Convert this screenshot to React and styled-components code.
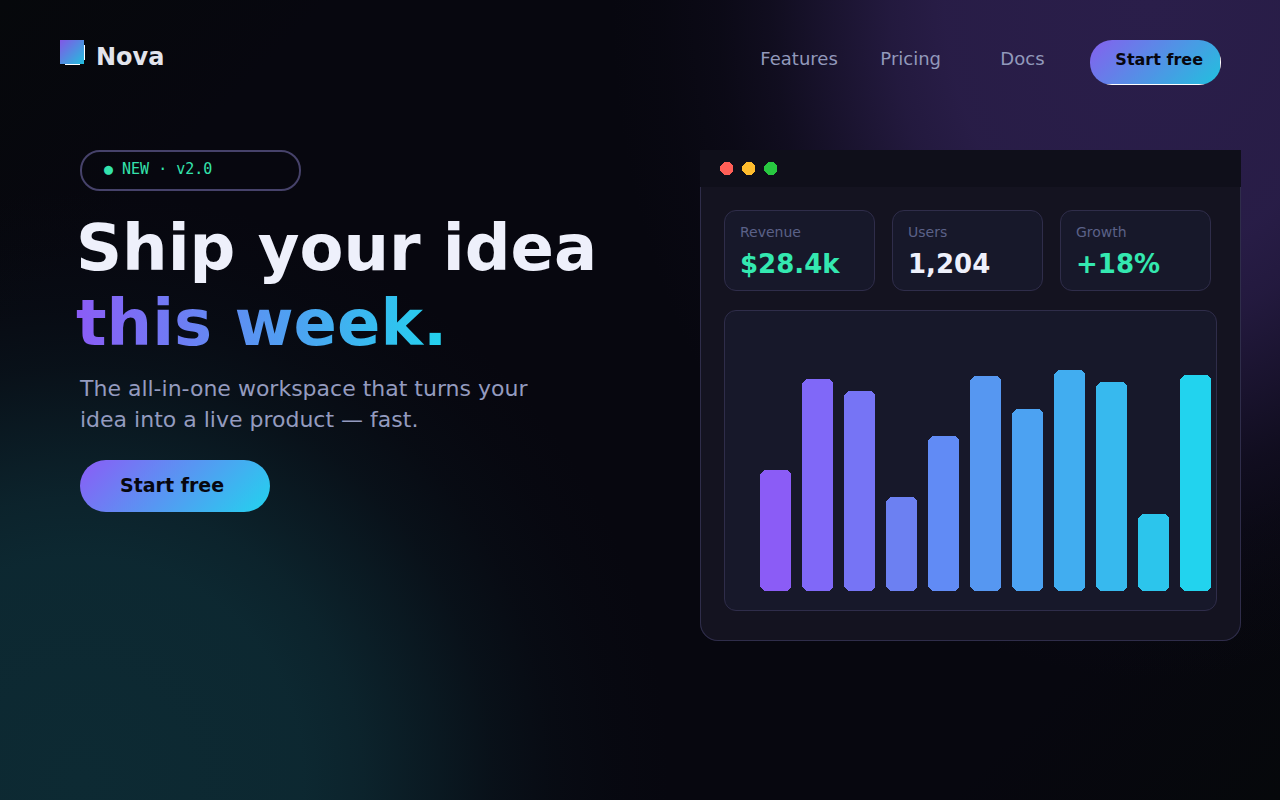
import styled, { createGlobalStyle } from 'styled-components'

const links = ['Features', 'Pricing', 'Docs']

const stats = [
  { label: 'Revenue', value: '$28.4k', up: true },
  { label: 'Users', value: '1,204', up: false },
  { label: 'Growth', value: '+18%', up: true },
]

const bars = [
  { height: 121, color: '#8b5cf6' },
  { height: 212, color: '#8068f8' },
  { height: 200, color: '#7674f5' },
  { height: 94, color: '#6c80f2' },
  { height: 155, color: '#618bf5' },
  { height: 215, color: '#5697f1' },
  { height: 182, color: '#4ca2f2' },
  { height: 221, color: '#41adf0' },
  { height: 209, color: '#37b9ee' },
  { height: 77, color: '#2cc5ec' },
  { height: 216, color: '#22d3ee' },
]

const dots = ['#ff5f57', '#febc2e', '#28c840']

const CHART_HEIGHT = 221
const BAR_WIDTH = 31
const BAR_STEP = 42

// box with its four corners cut off at 45 degrees
function cutBox(x, y, w, h, cut) {
  const side = w - cut * 2
  const rise = h - cut * 2
  return `M${x + cut} ${y}h${side}l${cut} ${cut}v${rise}l${-cut} ${cut}h${-side}l${-cut} ${-cut}v${-rise}z`
}

function Logo() {
  return (
    <svg width="25" height="25" viewBox="0 0 25 25" shapeRendering="crispEdges" aria-hidden="true">
      <defs>
        <linearGradient id="logo" x1="0" y1="0" x2="1" y2="1">
          <stop offset="0" stopColor="#8257e6" />
          <stop offset="1" stopColor="#22bfdd" />
        </linearGradient>
      </defs>
      <rect width="25" height="25" rx="8" fill="#fff" />
      <rect width="24" height="24" fill="url(#logo)" />
    </svg>
  )
}

function WindowDots() {
  return (
    <svg width="57" height="13" viewBox="0 0 57 13" shapeRendering="crispEdges" aria-hidden="true">
      {dots.map((color, idx) => (
        <path key={color} d={cutBox(idx * 22, 0, 13, 13, 4)} fill={color} />
      ))}
    </svg>
  )
}

function BarChart() {
  return (
    <svg viewBox="0 0 451 221" shapeRendering="crispEdges" role="img" aria-label="Growth chart">
      {bars.map((bar, idx) => (
        <path
          key={idx}
          d={cutBox(idx * BAR_STEP, CHART_HEIGHT - bar.height, BAR_WIDTH, bar.height, 4)}
          fill={bar.color}
        />
      ))}
    </svg>
  )
}

function App() {
  return (
    <>
      <GlobalStyle />
      <Page>
        <Header>
          <Brand href="#">
            <Logo />
            Nova
          </Brand>
          <Nav>
            {links.map((link) => (
              <NavLink key={link} href={`#${link.toLowerCase()}`}>{link}</NavLink>
            ))}
          </Nav>
          <NavButton type="button">Start free</NavButton>
        </Header>

        <Hero>
          <Copy>
            <Badge>● NEW · v2.0</Badge>
            <Title>
              Ship your idea
              <TitleAccent>this week.</TitleAccent>
            </Title>
            <Lead>The all-in-one workspace that turns your idea into a live product — fast.</Lead>
            <HeroButton type="button">Start free</HeroButton>
          </Copy>

          <Window>
            <TitleBar>
              <WindowDots />
            </TitleBar>
            <WindowBody>
              <Stats>
                {stats.map((stat) => (
                  <Stat key={stat.label}>
                    <StatLabel>{stat.label}</StatLabel>
                    <StatValue $up={stat.up}>{stat.value}</StatValue>
                  </Stat>
                ))}
              </Stats>
              <ChartPanel>
                <BarChart />
              </ChartPanel>
            </WindowBody>
          </Window>
        </Hero>
      </Page>
    </>
  )
}

const GlobalStyle = createGlobalStyle`
  * {
    box-sizing: border-box;
  }

  body {
    margin: 0;
    background: #07070f;
    color: #eef0fb;
    font-family: "DejaVu Sans", Verdana, sans-serif;
  }

  svg {
    display: block;
    flex: none;
  }
`

const glow = (rgb) => `
  rgba(${rgb}, 1) 0%,
  rgba(${rgb}, .94) 38%,
  rgba(${rgb}, .8) 48%,
  rgba(${rgb}, .52) 60%,
  rgba(${rgb}, .28) 70%,
  rgba(${rgb}, .12) 80%,
  rgba(${rgb}, .04) 90%,
  rgba(${rgb}, 0) 100%
`

const Page = styled.div`
  min-height: 100vh;
  background:
    radial-gradient(540px 680px at 1150px 0, ${glow('42, 30, 74')}),
    radial-gradient(590px 590px at 80px 780px, ${glow('13, 42, 51')}),
    linear-gradient(135deg, #06080b 0%, #07070f 16%, #07070f 84%, #06080b 100%);
`

const Header = styled.header`
  display: flex;
  align-items: flex-start;
  padding: 40px 59px 0 60px;
`

const Brand = styled.a`
  display: flex;
  gap: 11px;
  margin-right: auto;
  color: #e2e4ec;
  font-size: 24px;
  font-weight: bold;
  line-height: 34px;
  text-decoration: none;
`

const Nav = styled.nav`
  display: grid;
  grid-template-columns: 120px 120px 90px;
`

const NavLink = styled.a`
  color: #9299bb;
  font-size: 18px;
  line-height: 38px;
  text-decoration: none;
`

const Button = styled.button`
  border: 0;
  color: #07070f;
  font-family: inherit;
  font-weight: bold;
  text-align: left;
  white-space: nowrap;
  cursor: pointer;
`

const NavButton = styled(Button)`
  padding: 0 18px 6px 25px;
  border-radius: 22px;
  background:
    linear-gradient(135deg, #8560ee, #22c0de) 0 0 / calc(100% - 1px) calc(100% - 1px) no-repeat,
    #fff;
  font-size: 16px;
  line-height: 39px;
`

const HeroButton = styled(Button)`
  padding: 0 46px 2px 40px;
  border-radius: 26px;
  background: linear-gradient(135deg, #8b5cf6, #22d3ee);
  font-size: 19px;
  line-height: 50px;
`

const Hero = styled.main`
  display: grid;
  grid-template-columns: minmax(0, 1fr) minmax(0, 541px);
  gap: 40px;
  align-items: start;
  padding: 65px 39px 60px 80px;
`

const Copy = styled.div`
  display: flex;
  flex-direction: column;
  align-items: flex-start;
`

const Badge = styled.span`
  min-width: 221px;
  padding: 0 22px 2px;
  border: 2px solid #46426a;
  border-radius: 20px;
  color: #34e3ac;
  font-family: "DejaVu Sans Mono", monospace;
  font-size: 15px;
  line-height: 35px;
`

/* pulled left so the large glyphs line up optically with the text below */
const Title = styled.h1`
  margin: 20px 0 0 -4px;
  font-size: 64px;
  line-height: 75px;
`

const TitleAccent = styled.span`
  display: block;
  width: fit-content;
  background: linear-gradient(90deg, #8b5cf6, #22d3ee);
  background-clip: text;
  color: transparent;
`

const Lead = styled.p`
  max-width: 460px;
  margin: 12px 0 25px;
  color: #949bbf;
  font-size: 22px;
  line-height: 31px;
`

const Window = styled.section`
  border-radius: 0 0 18px 18px;
  background: #141320;
`

const TitleBar = styled.div`
  padding: 12px 20px;
  background: #0f0f1a;
`

const WindowBody = styled.div`
  padding: 23px 23px 29px;
  border: 1px solid #2f2d4a;
  border-top: 0;
  border-radius: 0 0 18px 18px;
`

const Stats = styled.dl`
  display: grid;
  grid-template-columns: repeat(3, 1fr);
  gap: 17px;
  margin: 0 0 19px;
  padding-right: 6px;
`

const Stat = styled.div`
  padding: 13px 15px 11px;
  border: 1px solid #2f2d4a;
  border-radius: 12px;
  background: #17182a;
`

const StatLabel = styled.dt`
  color: #5b6188;
  font-size: 14px;
  line-height: 16px;
`

const StatValue = styled.dd`
  margin: 9px 0 0;
  color: ${({ $up }) => ($up ? '#34e8b0' : '#eef0fb')};
  font-size: 26px;
  font-weight: bold;
  line-height: 30px;
`

const ChartPanel = styled.div`
  padding: 59px 5px 19px 35px;
  border: 1px solid #2f2d4a;
  border-radius: 12px;
  background: #17182a;
`

export default App
